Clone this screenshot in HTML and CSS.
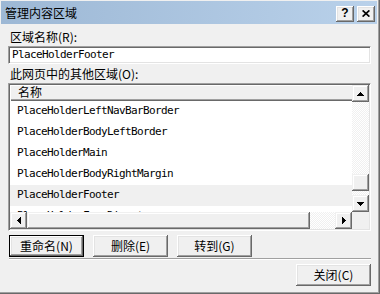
FILE: index.html
```html
<!DOCTYPE html>
<html lang="zh-CN">
<head>
<meta charset="utf-8">
<title>管理内容区域</title>
<link rel="stylesheet" href="styles.css">
</head>
<body>
<div class="window">
  <div class="titlebar">
    <span class="title">管理内容区域</span>
    <div class="caption-buttons">
      <span class="cap-btn help">?</span>
      <span class="cap-btn"><svg width="8" height="7" viewBox="0 0 8 7"><path d="M0.6 0.4 L7.4 6.6 M7.4 0.4 L0.6 6.6" stroke="#000" stroke-width="1.7" fill="none"/></svg></span>
    </div>
  </div>
  <div class="content">
    <div class="label">区域名称(R):</div>
    <div class="textbox"><span class="mono">PlaceHolderFooter</span></div>
    <div class="label label2">此网页中的其他区域(O):</div>
    <div class="listview">
      <div class="list-area">
        <div class="header"><span class="header-item">名称</span></div>
        <div class="row mono">PlaceHolderLeftNavBarBorder</div>
        <div class="row mono">PlaceHolderBodyLeftBorder</div>
        <div class="row mono">PlaceHolderMain</div>
        <div class="row mono">PlaceHolderBodyRightMargin</div>
        <div class="row mono selected">PlaceHolderFooter</div>
        <div class="row mono">PlaceHolderFormDigest</div>
      </div>
      <div class="vscroll">
        <div class="sb-btn"><svg width="7" height="4" viewBox="0 0 7 4"><path d="M3 0h1v1h-1z M2 1h3v1h-3z M1 2h5v1h-5z M0 3h7v1h-7z" fill="#000"/></svg></div>
        <div class="track vtrack"><div class="sb-thumb vthumb"></div></div>
        <div class="sb-btn"><svg width="7" height="4" viewBox="0 0 7 4"><path d="M0 0h7v1h-7z M1 1h5v1h-5z M2 2h3v1h-3z M3 3h1v1h-1z" fill="#000"/></svg></div>
      </div>
      <div class="hscroll">
        <div class="sb-btn"><svg width="4" height="7" viewBox="0 0 4 7"><path d="M0 3h1v1h-1z M1 2h1v3h-1z M2 1h1v5h-1z M3 0h1v7h-1z" fill="#000"/></svg></div>
        <div class="sb-thumb" style="width:283px"></div>
        <div class="track htrack"></div>
        <div class="sb-btn"><svg width="4" height="7" viewBox="0 0 4 7"><path d="M0 0h1v7h-1z M1 1h1v5h-1z M2 2h1v3h-1z M3 3h1v1h-1z" fill="#000"/></svg></div>
      </div>
      <div class="corner"></div>
    </div>
    <div class="btn-row">
      <button class="btn default">重命名(N)</button>
      <button class="btn">删除(E)</button>
      <button class="btn">转到(G)</button>
    </div>
    <div class="separator"></div>
    <div class="footer">
      <button class="btn">关闭(C)</button>
    </div>
  </div>
</div>
</body>
</html>
```

FILE: styles.css
```css
* { box-sizing: border-box; }
html, body { margin: 0; padding: 0; }
body {
  width: 380px;
  height: 294px;
  overflow: hidden;
  background: #f0f0f0;
  font-family: "Noto Sans CJK SC", sans-serif;
  font-size: 12px;
  color: #000;
}
.window {
  width: 380px;
  height: 294px;
  background: #f0f0f0;
  border-right: 1px solid #696969;
  border-bottom: 1px solid #696969;
  box-shadow: inset -1px -1px #a0a0a0;
  padding: 1px 2px 0 1px;
  display: flex;
  flex-direction: column;
}
.titlebar {
  height: 23px;
  flex: none;
  background: linear-gradient(to right, #9db8d5, #b9d1ea);
  display: flex;
  align-items: center;
  justify-content: space-between;
  padding: 0 2px 0 4px;
}
.title { line-height: 14px; }
.caption-buttons {
  display: flex;
  gap: 3px;
  margin-top: 2px;
}
.cap-btn {
  width: 18px;
  height: 16px;
  background: #f0f0f0;
  box-shadow: inset -1px -1px #696969, inset 1px 1px #fff, inset -2px -2px #a0a0a0, inset 2px 2px #e3e3e3;
  display: flex;
  align-items: center;
  justify-content: center;
}
.help {
  font-family: "Liberation Sans", sans-serif;
  font-weight: bold;
  font-size: 12px;
  line-height: 12px;
  padding-bottom: 1px;
}
.content {
  flex: 1;
  padding: 4px 6px 0 7px;
  display: flex;
  flex-direction: column;
}
.label {
  line-height: 18px;
  padding-left: 2px;
}
.label2 { line-height: 19px; }
.mono {
  font-family: "DejaVu Sans Mono", monospace;
  font-size: 11px;
  letter-spacing: -0.62px;
}
.textbox {
  height: 18px;
  background: #fff;
  border: 1px solid;
  border-color: #a0a0a0 #fff #fff #a0a0a0;
  box-shadow: inset 1px 1px #696969, inset -1px -1px #e3e3e3;
  padding-left: 3px;
  display: flex;
  align-items: center;
  line-height: 14px;
}
.listview {
  height: 148px;
  flex: none;
  background: #fff;
  border: 1px solid;
  border-color: #a0a0a0 #fff #fff #a0a0a0;
  box-shadow: inset 1px 1px #696969, inset -1px -1px #e3e3e3;
  padding: 1px;
  display: grid;
  grid-template-columns: 1fr 17px;
  grid-template-rows: 1fr 17px;
}
.list-area {
  overflow: hidden;
  min-width: 0;
  min-height: 0;
}
.header {
  height: 16px;
  background: #f0f0f0;
  box-shadow: inset 1px 1px #fff, inset 0 -1px #696969, inset 0 -2px #a0a0a0;
}
.header-item {
  display: block;
  padding-left: 8px;
  line-height: 14px;
  font-size: 12px;
}
.row {
  height: 21px;
  line-height: 20px;
  padding-left: 7px;
  white-space: nowrap;
}
.row.selected { background: #f0f0f0; }
.vscroll {
  display: flex;
  flex-direction: column;
}
.hscroll {
  display: flex;
}
.sb-btn {
  width: 17px;
  height: 17px;
  flex: none;
  background: #f0f0f0;
  box-shadow: inset -1px -1px #696969, inset 1px 1px #f0f0f0, inset -2px -2px #a0a0a0, inset 2px 2px #fff;
  display: flex;
  align-items: center;
  justify-content: center;
}
.sb-btn svg { display: block; }
.track {
  background-color: #fff;
  background-image: repeating-conic-gradient(#f0f0f0 0 25%, #fff 0 50%);
  background-size: 2px 2px;
}
.vtrack {
  flex: 1;
  display: flex;
  flex-direction: column;
  justify-content: flex-end;
  padding-bottom: 4px;
}
.htrack { flex: 1; }
.sb-thumb {
  flex: none;
  height: 17px;
  background: #f0f0f0;
  box-shadow: inset -1px -1px #696969, inset 1px 1px #f0f0f0, inset -2px -2px #a0a0a0, inset 2px 2px #fff;
}
.vthumb { width: 17px; }
.corner { background: #f0f0f0; }
.btn {
  width: 75px;
  height: 22px;
  padding: 0;
  margin: 0;
  border: none;
  background: #f0f0f0;
  font-family: "Noto Sans CJK SC", sans-serif;
  font-size: 12px;
  line-height: 14px;
  color: #000;
  box-shadow: inset -1px -1px #696969, inset 1px 1px #fff, inset -2px -2px #a0a0a0, inset 2px 2px #e3e3e3;
}
.btn.default { border: 1px solid #000; }
.btn-row {
  display: flex;
  gap: 9px;
  margin: 4px 0 0 1px;
}
.separator {
  height: 2px;
  margin: 1px 0 0 1px;
  border-top: 1px solid #a0a0a0;
  border-bottom: 1px solid #fff;
}
.footer {
  display: flex;
  justify-content: flex-end;
  margin-top: 4px;
}
```
